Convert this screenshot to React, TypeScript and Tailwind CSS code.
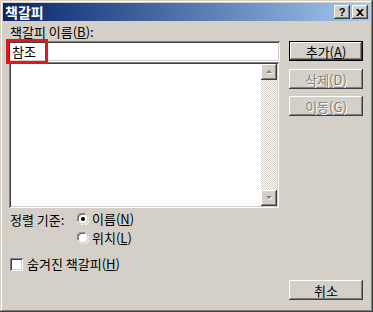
import React from "react";

const raised =
  "shadow-[inset_-1px_-1px_#404040,inset_1px_1px_#ffffff,inset_-2px_-2px_#808080,inset_2px_2px_#d4d0c8]";
const sunken =
  "shadow-[inset_1px_1px_#808080,inset_-1px_-1px_#ffffff,inset_2px_2px_#404040,inset_-2px_-2px_#d4d0c8]";

function Btn({
  children,
  disabled,
  isDefault,
}: {
  children: React.ReactNode;
  disabled?: boolean;
  isDefault?: boolean;
}) {
  return (
    <div
      className={`h-[20px] w-[74px] bg-[#d4d0c8] ${isDefault ? "border border-black" : ""} flex items-center justify-center`}
    >
      <div
        className={`w-full h-full flex items-center justify-center text-[13px] leading-[15px] ${raised} ${
          disabled ? "text-[#808080] [text-shadow:1px_1px_0_#ffffff]" : "text-black"
        }`}
      >
        {children}
      </div>
    </div>
  );
}

function ScrollArrow({ up }: { up?: boolean }) {
  return (
    <div className={`w-[16px] h-[16px] bg-[#d4d0c8] ${raised} flex items-center justify-center`}>
      <svg width="9" height="6" viewBox="0 0 9 6">
        {up ? (
          <>
            <polygon points="2,5 8,5 5,2" fill="#ffffff" />
            <polygon points="1,4 7,4 4,1" fill="#808080" />
          </>
        ) : (
          <>
            <polygon points="2,2 8,2 5,5" fill="#ffffff" />
            <polygon points="1,1 7,1 4,4" fill="#808080" />
          </>
        )}
      </svg>
    </div>
  );
}

function Radio({ checked }: { checked?: boolean }) {
  return (
    <svg width="12" height="12" viewBox="0 0 12 12" className="shrink-0">
      <path d="M0.5 8 A5.5 5.5 0 0 1 8 0.5" stroke="#808080" fill="none" />
      <path d="M11.5 4 A5.5 5.5 0 0 1 4 11.5" stroke="#ffffff" fill="none" />
      <circle cx="6" cy="6" r="4.5" fill="#ffffff" />
      <path d="M1.5 7.5 A4.5 4.5 0 0 1 7.5 1.5" stroke="#404040" fill="none" />
      <path d="M10.5 4.5 A4.5 4.5 0 0 1 4.5 10.5" stroke="#d4d0c8" fill="none" />
      {checked && <circle cx="6" cy="6" r="2" fill="#000000" />}
    </svg>
  );
}

export default function App() {
  return (
    <div
      className="w-[373px] h-[312px] bg-[#d4d0c8] p-[3px] flex flex-col text-black text-[13px] shadow-[inset_-1px_-1px_#404040,inset_1px_1px_#d4d0c8,inset_-2px_-2px_#808080,inset_2px_2px_#ffffff]"
      style={{ fontFamily: '"Noto Sans CJK KR", "Noto Sans", sans-serif' }}
    >
      {/* Title bar */}
      <div className="h-[18px] bg-gradient-to-r from-[#0a246a] to-[#a6caf0] flex items-center pl-[2px] pr-[2px]">
        <span className="text-white font-bold text-[14px] leading-[16px]">책갈피</span>
        <div className="ml-auto flex items-center">
          <div className={`w-[16px] h-[14px] bg-[#d4d0c8] ${raised} flex items-center justify-center text-[11px] font-bold leading-none`}>
            <span style={{ fontFamily: '"Liberation Sans", sans-serif' }}>?</span>
          </div>
          <div className={`ml-[2px] w-[16px] h-[14px] bg-[#d4d0c8] ${raised} flex items-center justify-center`}>
            <svg width="8" height="7" viewBox="0 0 8 7">
              <path d="M0 0 L2 0 L4 2 L6 0 L8 0 L5 3.5 L8 7 L6 7 L4 5 L2 7 L0 7 L3 3.5 Z" fill="#000" />
            </svg>
          </div>
        </div>
      </div>

      {/* Body */}
      <div className="flex flex-1 pl-[5px] pr-[7px] pb-[9px]">
        <div className="w-[272px] flex flex-col">
          <div className="mt-[4px] h-[14px] leading-[14px] pl-[2px]">
            책갈피 이름(<span className="underline">B</span>):
          </div>
          <div className={`relative mt-[2px] h-[21px] bg-white ${sunken} flex items-center pl-[4px]`}>
            <span className="text-[13px] leading-[15px]">참조</span>
            <div className="absolute left-[-2px] top-[-2px] w-[42px] h-[25px] border-[3px] border-[#e8141c]" />
          </div>
          <div className={`ml-[1px] mr-[1px] h-[146px] bg-white ${sunken} flex justify-end p-[2px]`}>
            <div className="w-[16px] flex flex-col">
              <ScrollArrow up />
              <div className="flex-1 bg-[repeating-conic-gradient(#d4d0c8_0_25%,#ffffff_0_50%)] bg-[length:2px_2px]" />
              <ScrollArrow />
            </div>
          </div>

          <div className="flex mt-[4px] pl-[2px]">
            <div className="w-[67px] h-[14px] leading-[14px] mt-[1px]">정렬 기준:</div>
            <div className="flex flex-col gap-[7px]">
              <div className="flex items-center gap-[3px] h-[12px] mt-[1px]">
                <Radio checked />
                <span className="leading-[14px]">
                  이름(<span className="underline">N</span>)
                </span>
              </div>
              <div className="flex items-center gap-[3px] h-[12px]">
                <Radio />
                <span className="leading-[14px]">
                  위치(<span className="underline">L</span>)
                </span>
              </div>
            </div>
          </div>

          <div className="flex items-center gap-[4px] mt-[13px] pl-[2px]">
            <div className={`w-[13px] h-[13px] bg-white ${sunken}`} />
            <span className="leading-[14px]">
              숨겨진 책갈피(<span className="underline">H</span>)
            </span>
          </div>
        </div>

        <div className="ml-[9px] w-[74px] flex flex-col">
          <div className="mt-[20px]">
            <Btn isDefault>
              추가(<span className="underline">A</span>)
            </Btn>
          </div>
          <div className="mt-[8px]">
            <Btn disabled>삭제(D)</Btn>
          </div>
          <div className="mt-[7px]">
            <Btn disabled>이동(G)</Btn>
          </div>
          <div className="mt-auto">
            <Btn>취소</Btn>
          </div>
        </div>
      </div>
    </div>
  );
}
